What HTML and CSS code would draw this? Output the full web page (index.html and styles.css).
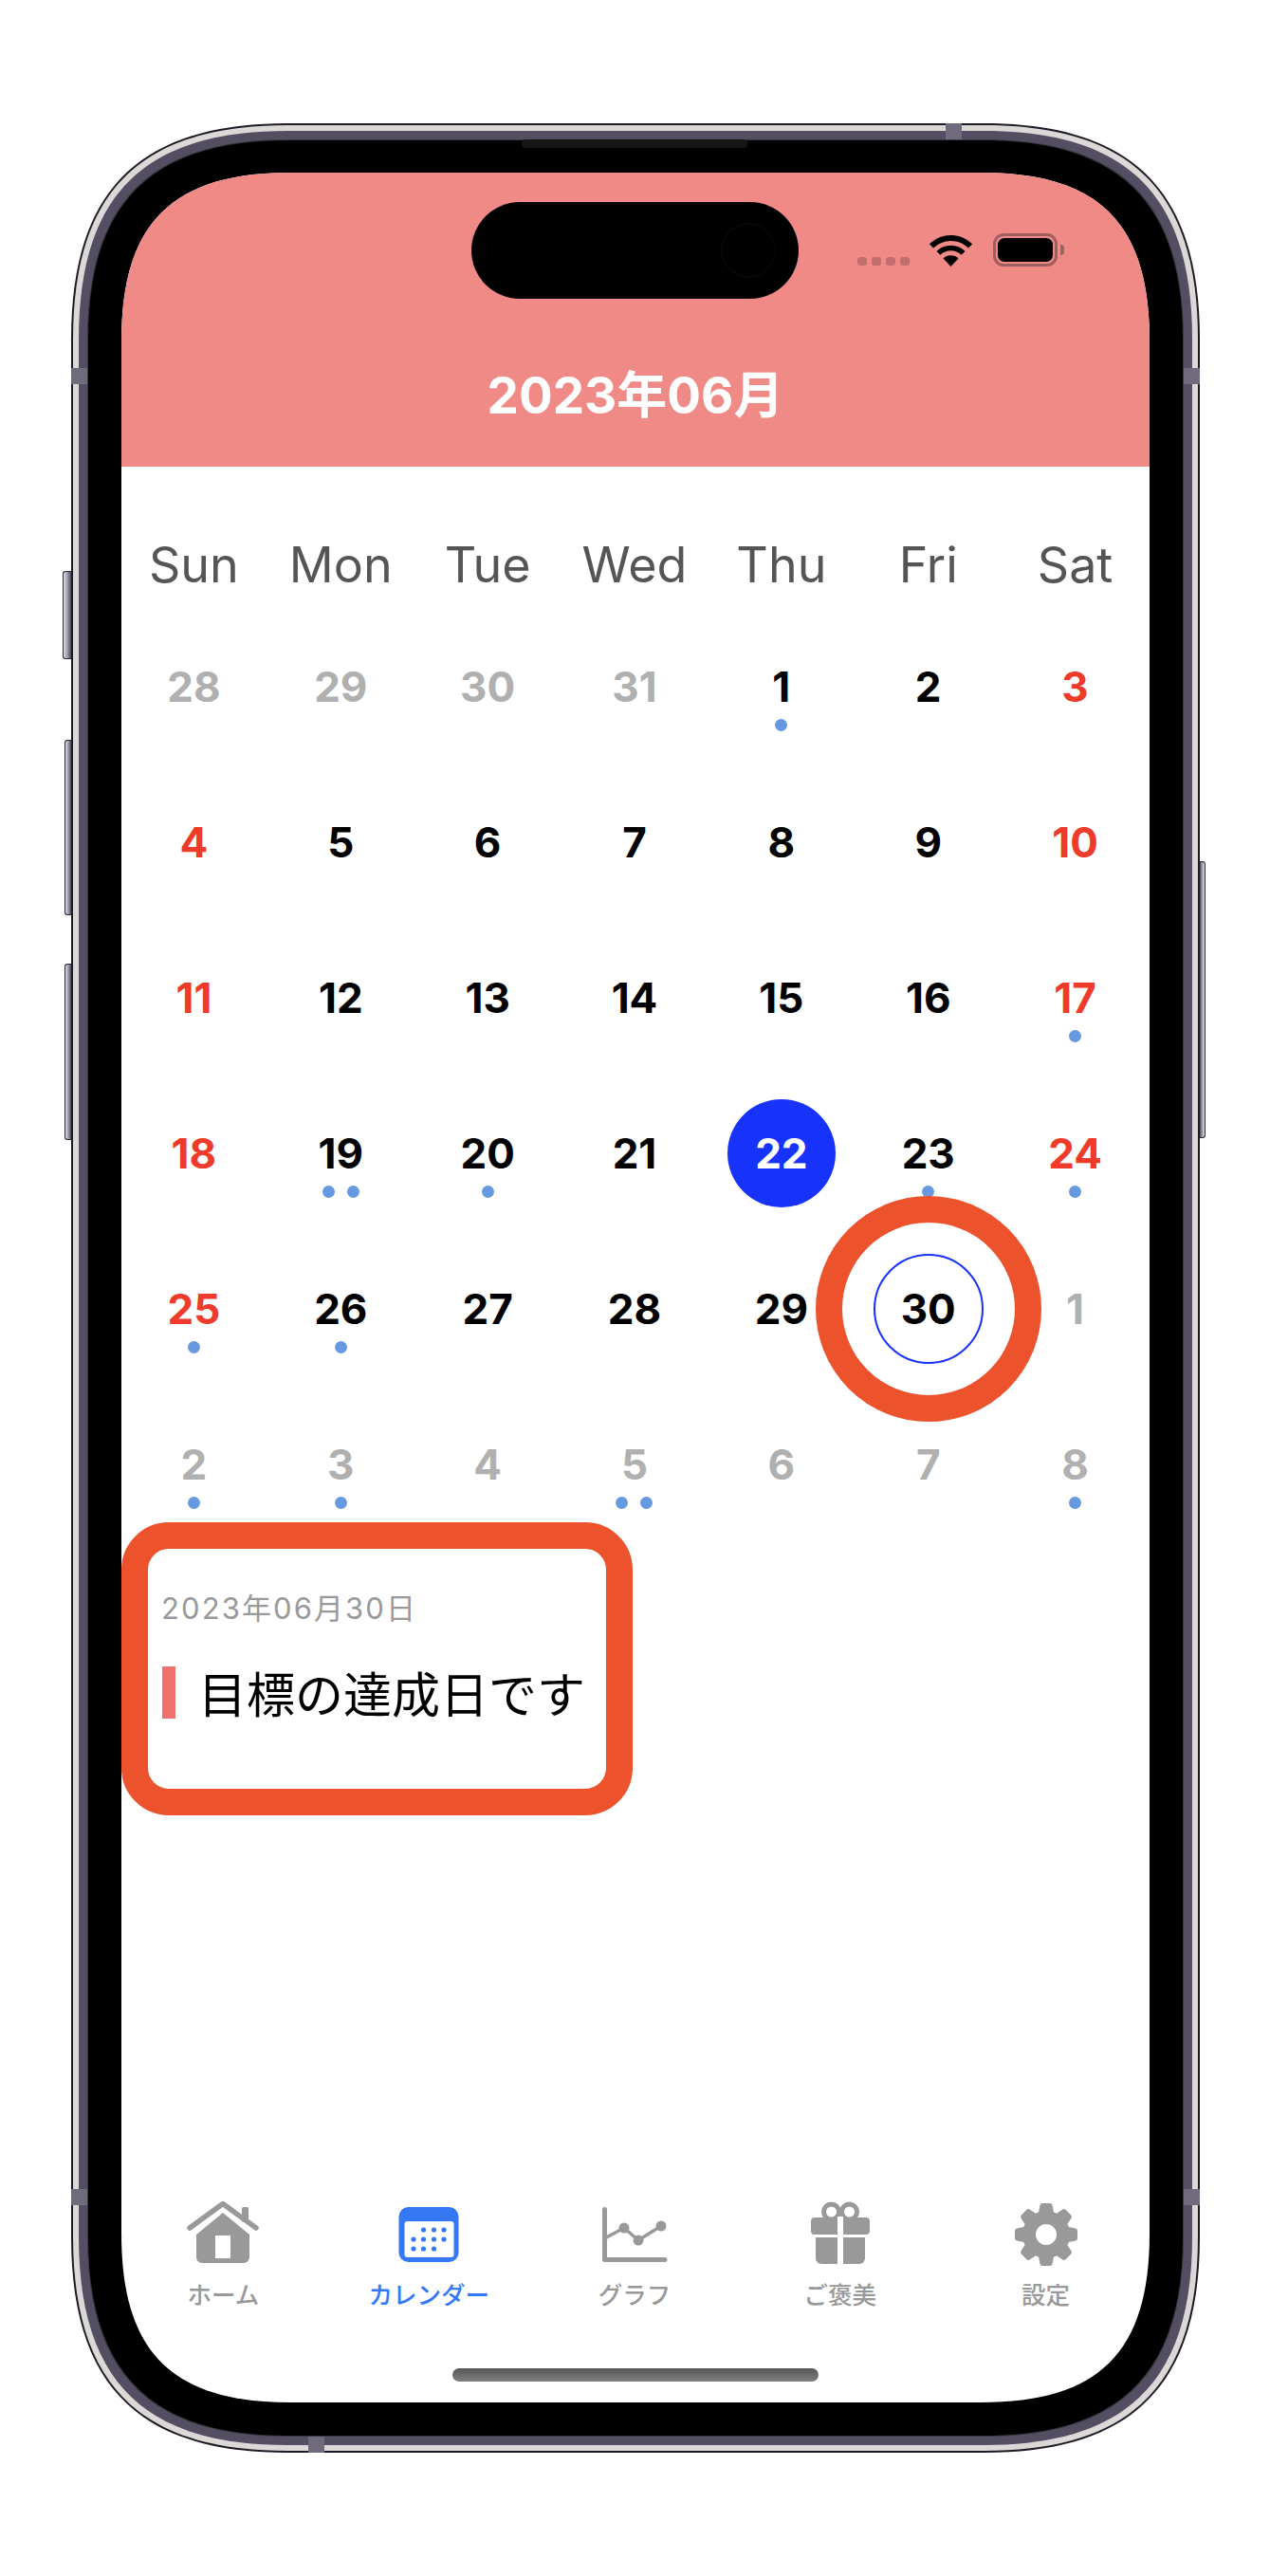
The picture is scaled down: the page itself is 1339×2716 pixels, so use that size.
FILE: index.html
```html
<!DOCTYPE html>
<html lang="ja">
<head>
    <meta charset="UTF-8">
    <meta name="viewport" content="width=device-width, initial-scale=1.0">
    <title>カレンダー</title>
    <link rel="stylesheet" href="styles.css">
</head>
<body>
    <div class="phone">
        <svg class="frame" width="1190" height="2456" viewBox="0 0 1190 2456">
            <path fill="#1c1a24" d="M228 0H962C1119 0 1190 71 1190 228V2228C1190 2385 1119 2456 962 2456H228C71 2456 0 2385 0 2228V228C0 71 71 0 228 0Z"/>
            <path fill="#dcd8d8" d="M228 2H962C1118 2 1188 72 1188 228V2228C1188 2384 1118 2454 962 2454H228C72 2454 2 2384 2 2228V228C2 72 72 2 228 2Z"/>
            <path fill="#544e62" d="M228 8H962C1114 8 1182 76 1182 228V2228C1182 2380 1114 2448 962 2448H228C76 2448 8 2380 8 2228V228C8 76 76 8 228 8Z"/>
            <path fill="#38363f" d="M228 17H962C1107 17 1173 83 1173 228V2228C1173 2373 1107 2439 962 2439H228C83 2439 17 2373 17 2228V228C17 83 83 17 228 17Z"/>
            <path fill="#000" d="M228 18H962C1106 18 1172 84 1172 228V2228C1172 2372 1106 2438 962 2438H228C84 2438 18 2372 18 2228V228C18 84 84 18 228 18Z"/>
            <rect x="475" y="17" width="238" height="9" rx="4" fill="#161616"/>
            <g fill="#6f6a7c">
                <rect x="0" y="258" width="17" height="17"/>
                <rect x="0" y="2178" width="17" height="17"/>
                <rect x="1173" y="258" width="17" height="17"/>
                <rect x="1173" y="2178" width="17" height="17"/>
                <rect x="922" y="0" width="17" height="17"/>
                <rect x="250" y="2439" width="17" height="17"/>
            </g>
        </svg>
        <div class="side-btn mute"></div>
        <div class="side-btn vol-up"></div>
        <div class="side-btn vol-down"></div>
        <div class="side-btn power"></div>

        <div class="screen">
            <div class="island"></div>
            <header class="header">
                <div class="status">
                    <div class="signal"><span></span><span></span><span></span><span></span></div>
                    <svg class="wifi" width="45" height="34" viewBox="0 0 45 34">
                        <path d="M2 12.5A29 29 0 0 1 43 12.5" fill="none" stroke="#000" stroke-width="6"/>
                        <path d="M9.4 19.9A18.5 18.5 0 0 1 35.6 19.9" fill="none" stroke="#000" stroke-width="5.5"/>
                        <path d="M22.5 34L14.5 25.5A11.3 11.3 0 0 1 30.5 25.5Z"/>
                    </svg>
                    <div class="battery"><div class="battery-fill"></div></div>
                    <div class="battery-cap"></div>
                </div>
                <h1 class="title">2023年06月</h1>
            </header>

            <div class="weekdays">
                <div>Sun</div><div>Mon</div><div>Tue</div><div>Wed</div><div>Thu</div><div>Fri</div><div>Sat</div>
            </div>

            <div class="days">
                <div class="day other"><div class="num">28</div></div>
                <div class="day other"><div class="num">29</div></div>
                <div class="day other"><div class="num">30</div></div>
                <div class="day other"><div class="num">31</div></div>
                <div class="day"><div class="num">1</div><div class="dots"><i></i></div></div>
                <div class="day"><div class="num">2</div></div>
                <div class="day red"><div class="num">3</div></div>

                <div class="day red"><div class="num">4</div></div>
                <div class="day"><div class="num">5</div></div>
                <div class="day"><div class="num">6</div></div>
                <div class="day"><div class="num">7</div></div>
                <div class="day"><div class="num">8</div></div>
                <div class="day"><div class="num">9</div></div>
                <div class="day red"><div class="num">10</div></div>

                <div class="day red"><div class="num">11</div></div>
                <div class="day"><div class="num">12</div></div>
                <div class="day"><div class="num">13</div></div>
                <div class="day"><div class="num">14</div></div>
                <div class="day"><div class="num">15</div></div>
                <div class="day"><div class="num">16</div></div>
                <div class="day red"><div class="num">17</div><div class="dots"><i></i></div></div>

                <div class="day red"><div class="num">18</div></div>
                <div class="day"><div class="num">19</div><div class="dots"><i></i><i></i></div></div>
                <div class="day"><div class="num">20</div><div class="dots"><i></i></div></div>
                <div class="day"><div class="num">21</div></div>
                <div class="day today"><div class="num">22</div></div>
                <div class="day"><div class="num">23</div><div class="dots"><i></i></div></div>
                <div class="day red"><div class="num">24</div><div class="dots"><i></i></div></div>

                <div class="day red"><div class="num">25</div><div class="dots"><i></i></div></div>
                <div class="day"><div class="num">26</div><div class="dots"><i></i></div></div>
                <div class="day"><div class="num">27</div></div>
                <div class="day"><div class="num">28</div></div>
                <div class="day"><div class="num">29</div></div>
                <div class="day selected"><div class="num">30</div></div>
                <div class="day other"><div class="num">1</div></div>

                <div class="day other"><div class="num">2</div><div class="dots"><i></i></div></div>
                <div class="day other"><div class="num">3</div><div class="dots"><i></i></div></div>
                <div class="day other"><div class="num">4</div></div>
                <div class="day other"><div class="num">5</div><div class="dots"><i></i><i></i></div></div>
                <div class="day other"><div class="num">6</div></div>
                <div class="day other"><div class="num">7</div></div>
                <div class="day other"><div class="num">8</div><div class="dots"><i></i></div></div>
            </div>

            <section class="events">
                <div class="callout"></div>
                <div class="event-date">2023年06月30日</div>
                <div class="event">
                    <span class="event-bar"></span>
                    <span class="event-text">目標の達成日です</span>
                </div>
            </section>

            <nav class="tabs">
                <div class="tab">
                    <svg width="80" height="70" viewBox="0 0 80 70">
                        <path class="line" d="M5 29L40 3.5L75 29" stroke-width="5.5"/>
                        <rect class="fill" x="60" y="7" width="7" height="16" rx="1.5"/>
                        <path class="fill" fill-rule="evenodd" d="M40 13L68 36V60a6 6 0 0 1-6 6H18a6 6 0 0 1-6-6V36ZM32 37h16v24h-16z"/>
                    </svg>
                    <span>ホーム</span>
                </div>
                <div class="tab active">
                    <svg width="80" height="70" viewBox="0 0 80 70">
                        <rect class="fill" x="8.5" y="7" width="63" height="58" rx="10"/>
                        <rect x="14.5" y="22" width="52" height="38" rx="3" fill="#fff"/>
                        <g class="fill">
                            <circle cx="34.5" cy="31" r="2.6"/><circle cx="45.5" cy="31" r="2.6"/><circle cx="56" cy="31" r="2.6"/>
                            <circle cx="24" cy="41" r="2.6"/><circle cx="34.5" cy="41" r="2.6"/><circle cx="45.5" cy="41" r="2.6"/><circle cx="56" cy="41" r="2.6"/>
                            <circle cx="24" cy="51" r="2.6"/><circle cx="34.5" cy="51" r="2.6"/><circle cx="45.5" cy="51" r="2.6"/>
                        </g>
                    </svg>
                    <span>カレンダー</span>
                </div>
                <div class="tab">
                    <svg width="80" height="70" viewBox="0 0 80 70">
                        <path class="line" d="M8.5 9.5V62.5H72" stroke-width="5"/>
                        <path class="line" d="M8.5 40L29 29L44 42L68 27" stroke-width="3.5"/>
                        <g class="fill"><circle cx="29" cy="29" r="5.5"/><circle cx="44" cy="42" r="5.5"/><circle cx="68" cy="27" r="5.5"/></g>
                    </svg>
                    <span>グラフ</span>
                </div>
                <div class="tab">
                    <svg width="80" height="70" viewBox="0 0 80 70">
                        <circle class="line" cx="30.5" cy="12" r="8" stroke-width="5"/>
                        <circle class="line" cx="49.5" cy="12" r="8" stroke-width="5"/>
                        <rect class="fill" x="9" y="18" width="62" height="18" rx="4"/>
                        <path class="fill" d="M14 39H66V61a6 6 0 0 1-6 6H20a6 6 0 0 1-6-6Z"/>
                        <rect x="37" y="17" width="6" height="51" fill="#fff"/>
                    </svg>
                    <span>ご褒美</span>
                </div>
                <div class="tab">
                    <svg width="80" height="70" viewBox="0 0 80 70">
                        <g class="fill">
                            <circle cx="40" cy="36" r="25"/>
                            <path id="tooth" d="M31.5 15L33.5 5Q34 3 36 3H44Q46 3 46.5 5L48.5 15Z"/>
                            <use href="#tooth" transform="rotate(45 40 36)"/>
                            <use href="#tooth" transform="rotate(90 40 36)"/>
                            <use href="#tooth" transform="rotate(135 40 36)"/>
                            <use href="#tooth" transform="rotate(180 40 36)"/>
                            <use href="#tooth" transform="rotate(225 40 36)"/>
                            <use href="#tooth" transform="rotate(270 40 36)"/>
                            <use href="#tooth" transform="rotate(315 40 36)"/>
                        </g>
                        <circle cx="40" cy="36" r="11" fill="#fff"/>
                    </svg>
                    <span>設定</span>
                </div>
            </nav>
            <div class="home-bar"></div>
        </div>
    </div>
</body>
</html>
```

FILE: styles.css
```css
body {
    margin: 0;
    padding: 130px 74px 130px 75px;
    background-color: #fff;
    font-family: Inter, "Noto Sans CJK JP", sans-serif;
}

/* device frame */
.phone {
    position: relative;
    width: 1190px;
    height: 2456px;
    box-sizing: border-box;
    padding: 52px 53px 53px;
}

.frame {
    position: absolute;
    top: 0;
    left: 0;
}

.side-btn {
    position: absolute;
    width: 9px;
    box-sizing: border-box;
    background: linear-gradient(90deg, #dcd8d8, #a9a5b8 45%, #4a4757);
    border: 1.5px solid #2d2b35;
    border-right: none;
    border-radius: 3px 0 0 3px;
}

.mute { left: -9px; top: 472px; height: 93px; }
.vol-up { left: -7px; width: 7px; top: 650px; height: 185px; }
.vol-down { left: -7px; width: 7px; top: 886px; height: 186px; }

.power {
    left: 100%;
    width: 6px;
    top: 778px;
    height: 292px;
    background: linear-gradient(270deg, #dcd8d8, #a9a5b8 45%, #4a4757);
    border: 1.5px solid #2d2b35;
    border-left: none;
    border-radius: 0 3px 3px 0;
}

/* screen */
.screen {
    position: relative;
    isolation: isolate;
    display: flex;
    flex-direction: column;
    height: 100%;
    background-color: #fff;
    clip-path: path("M178 0H906C1031 0 1084 53 1084 178V2173C1084 2298 1031 2351 906 2351H178C53 2351 0 2298 0 2173V178C0 53 53 0 178 0Z");
}

.island {
    position: absolute;
    top: 31px;
    left: 369px;
    width: 345px;
    height: 102px;
    background-color: #000;
    border-radius: 51px;
}

.island::after {
    content: "";
    position: absolute;
    top: 22px;
    right: 24px;
    width: 58px;
    height: 58px;
    box-sizing: border-box;
    border: 2px solid #060508;
    border-radius: 50%;
}

.header {
    flex: none;
    height: 310px;
    box-sizing: border-box;
    padding-top: 64px;
    background-color: #f08a86;
}

.status {
    display: flex;
    justify-content: flex-end;
    align-items: flex-end;
    height: 35px;
    padding-right: 90px;
}

.signal {
    display: flex;
    gap: 5px;
    margin-right: 21px;
    padding-bottom: 1px;
}

.signal span {
    width: 10px;
    height: 9px;
    background-color: #c06e6e;
    border-radius: 3px;
}

.wifi {
    margin-right: 22px;
}

.battery {
    width: 68px;
    height: 35px;
    box-sizing: border-box;
    padding: 2px;
    border: 3px solid #9d5f5f;
    border-radius: 11px;
}

.battery-fill {
    height: 100%;
    background-color: #000;
    border-radius: 7px;
}

.battery-cap {
    width: 4px;
    height: 11px;
    margin: 0 0 12px 3px;
    background-color: #9d5f5f;
    border-radius: 0 4px 4px 0;
}

.title {
    margin: 106px 0 0;
    font-size: 53px;
    line-height: 60px;
    font-weight: 700;
    text-align: center;
    color: #fff;
}

/* calendar */
.weekdays {
    flex: none;
    display: grid;
    grid-template-columns: repeat(7, 1fr);
    margin: 0 1px 2px -1px;
    padding-top: 60px;
    font-size: 52px;
    line-height: 88px;
    text-align: center;
    color: #555;
}

.days {
    flex: none;
    display: grid;
    grid-template-columns: repeat(7, 1fr);
    grid-auto-rows: 164px;
    margin: 0 1px 0 -1px;
    font-size: 44px;
    font-weight: 650;
    text-align: center;
    color: #000;
}

.day {
    padding-top: 56px;
}

.day.other { color: #b0b0b0; }
.day.red { color: #ee3b2b; }
.day.today { color: #fff; }

.num {
    position: relative;
    height: 52px;
    line-height: 52px;
}

.today .num::before,
.selected .num::before,
.selected .num::after {
    content: "";
    position: absolute;
    left: 50%;
    top: 50%;
    box-sizing: border-box;
    border-radius: 50%;
    transform: translate(-50%, -50%);
}

.today .num::before {
    z-index: -1;
    width: 114px;
    height: 114px;
    background-color: #1733fb;
}

.selected .num::before {
    width: 116px;
    height: 116px;
    border: 2.5px solid #1733fb;
}

.selected .num::after {
    z-index: 2;
    width: 238px;
    height: 238px;
    border: 28px solid #ec532d;
}

.dots {
    display: flex;
    justify-content: center;
    gap: 13px;
    margin-top: 8px;
}

.dots i {
    width: 13px;
    height: 13px;
    background-color: #6699e0;
    border-radius: 50%;
}

/* selected day's events */
.events {
    position: relative;
    flex: 1;
    padding: 52px 0 0 43px;
}

.callout {
    position: absolute;
    top: -21px;
    left: 0;
    width: 539px;
    height: 309px;
    box-sizing: border-box;
    border: 28px solid #ec532d;
    border-radius: 50px;
}

.event-date {
    margin-left: -1px;
    font-size: 31px;
    line-height: 36px;
    letter-spacing: 2.1px;
    color: #999;
}

.event {
    display: flex;
    align-items: center;
    gap: 24px;
    margin-top: 40px;
}

.event-bar {
    width: 14px;
    height: 55px;
    background-color: #f0706e;
}

.event-text {
    font-family: "Noto Sans CJK JP", sans-serif;
    font-size: 51px;
    line-height: 60px;
    font-weight: 400;
    color: #000;
}

/* tab bar */
.tabs {
    flex: none;
    display: grid;
    grid-template-columns: repeat(5, 1fr);
    margin: 0 1px 0 -1px;
    text-align: center;
    color: #999;
}

.tab svg {
    display: block;
    margin: 0 auto 13px;
}

.tab span {
    display: block;
    font-family: "Noto Sans CJK JP", sans-serif;
    font-size: 25.5px;
    line-height: 30px;
    font-weight: 500;
}

.tab .fill { fill: #999; }
.tab .line { fill: none; stroke: #999; stroke-linecap: round; stroke-linejoin: round; }

.tab.active { color: #3478f6; }
.tab.active .fill { fill: #3478f6; }

.home-bar {
    flex: none;
    align-self: center;
    width: 386px;
    height: 14px;
    margin: 64px 0 22px;
    background: linear-gradient(#555, #808080);
    border-radius: 7px;
}
```
